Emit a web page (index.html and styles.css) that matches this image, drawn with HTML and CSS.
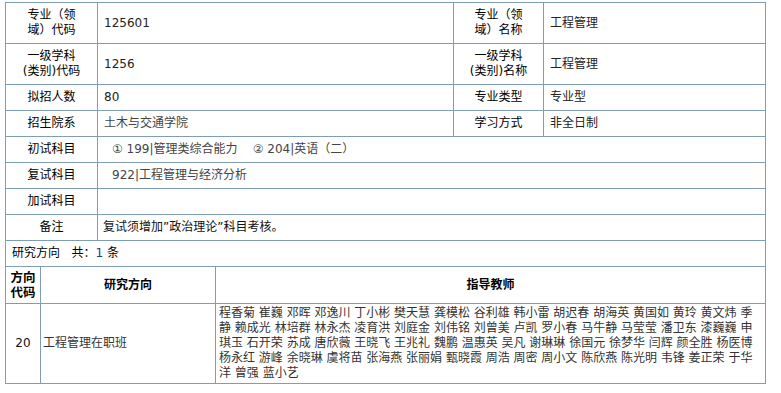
FILE: index.html
```html
<!DOCTYPE html>
<html lang="zh-CN">
<head>
<meta charset="utf-8">
<title>专业信息</title>
<link rel="stylesheet" href="styles.css">
</head>
<body>
<div class="page">
  <table class="info">
    <colgroup>
      <col class="c1"><col class="c2"><col class="c3"><col class="c4">
    </colgroup>
    <tr>
      <td class="label">专业（领<br>域）代码</td>
      <td class="value">125601</td>
      <td class="label">专业（领<br>域）名称</td>
      <td class="value">工程管理</td>
    </tr>
    <tr>
      <td class="label">一级学科<br>(类别)代码</td>
      <td class="value">1256</td>
      <td class="label">一级学科<br>(类别)名称</td>
      <td class="value">工程管理</td>
    </tr>
    <tr>
      <td class="label">拟招人数</td>
      <td class="value">80</td>
      <td class="label">专业类型</td>
      <td class="value">专业型</td>
    </tr>
    <tr>
      <td class="label">招生院系</td>
      <td class="value soft">土木与交通学院</td>
      <td class="label">学习方式</td>
      <td class="value">非全日制</td>
    </tr>
    <tr>
      <td class="label">初试科目</td>
      <td class="value soft indent" colspan="3">① 199|管理类综合能力&nbsp;&nbsp;&nbsp; ② 204|英语（二）</td>
    </tr>
    <tr>
      <td class="label">复试科目</td>
      <td class="value soft indent" colspan="3">922|工程管理与经济分析</td>
    </tr>
    <tr>
      <td class="label">加试科目</td>
      <td class="value" colspan="3"></td>
    </tr>
    <tr>
      <td class="label">备注</td>
      <td class="value note" colspan="3">复试须增加”政治理论”科目考核。</td>
    </tr>
    <tr>
      <td class="summary" colspan="4">研究方向&nbsp;&nbsp;&nbsp;共：<span class="count">1</span> 条</td>
    </tr>
  </table>
  <table class="dirs">
    <colgroup>
      <col class="d1"><col class="d2"><col class="d3">
    </colgroup>
    <tr>
      <th class="code-h">方向<br>代码</th>
      <th>研究方向</th>
      <th>指导教师</th>
    </tr>
    <tr>
      <td class="code">20</td>
      <td class="dir">工程管理在职班</td>
      <td class="teachers">程香菊 崔巍 邓晖 邓逸川 丁小彬 樊天慧 龚模松 谷利雄 韩小雷 胡迟春 胡海英 黄国如 黄玲 黄文炜 季<br>静 赖成光 林培群 林永杰 凌育洪 刘庭金 刘伟铭 刘曾美 卢凯 罗小春 马牛静 马莹莹 潘卫东 漆巍巍 申<br>琪玉 石开荣 苏成 唐欣薇 王晓飞 王兆礼 魏鹏 温惠英 吴凡 谢琳琳 徐国元 徐梦华 闫辉 颜全胜 杨医博<br>杨永红 游峰 余晓琳 虞将苗 张海燕 张丽娟 甄晓霞 周浩 周密 周小文 陈欣燕 陈光明 韦锋 姜正荣 于华<br>洋 曾强 蓝小艺</td>
    </tr>
  </table>
</div>
</body>
</html>
```

FILE: styles.css
```css
html, body {
  margin: 0;
  padding: 0;
  background: #fff;
}

body {
  font-family: "DejaVu Sans", "Noto Sans CJK SC", sans-serif;
  font-size: 12px;
  color: #000;
}

.page {
  padding: 2px 0 0 5px;
  width: 760px;
}

table {
  border-collapse: collapse;
  table-layout: fixed;
  width: 760px;
}

td, th {
  border: 1px solid #7f9db9;
  line-height: 15px;
}

.c1 { width: 92px; }
.c2 { width: 356px; }
.c3 { width: 90px; }
.c4 { width: 222px; }

.info td {
  padding: 5px 6px;
  vertical-align: middle;
}

.info .label {
  text-align: center;
  padding-left: 2px;
  padding-right: 2px;
}

.info .value {
  text-align: left;
  color: #222;
}

.info .soft {
  color: #444;
}

.info .indent {
  padding-left: 14px;
}

.info .note {
  padding-left: 5px;
  color: #111;
}

.info .summary {
  text-align: left;
  padding-left: 6px;
  border-bottom: none;
}

.count {
  color: #1a3e8c;
}

.d1 { width: 35px; }
.d2 { width: 175px; }
.d3 { width: 550px; }

.dirs th {
  padding: 3px 1px;
  font-weight: bold;
  text-align: center;
  vertical-align: middle;
  font-size: 12px;
}

.dirs .code-h {
  font-size: 12.5px;
  line-height: 15px;
}

.dirs td {
  padding: 2px 2px;
  vertical-align: middle;
  color: #333;
}

.dirs .code {
  text-align: center;
  color: #111;
}

.dirs .dir {
  text-align: left;
  padding-left: 2px;
}

.dirs .teachers {
  text-align: left;
  padding-left: 3px;
  white-space: nowrap;
}
```
